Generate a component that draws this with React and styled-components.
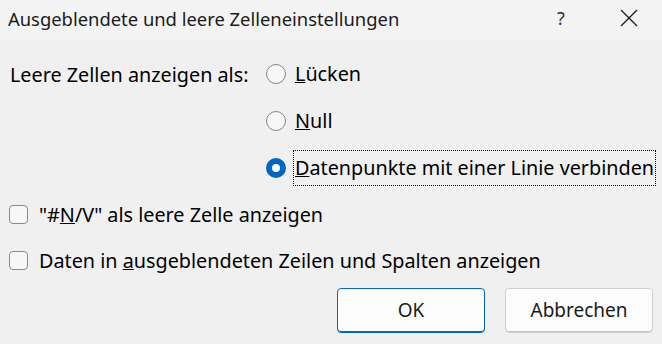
import React from 'react';
import styled, { createGlobalStyle } from 'styled-components';

const GlobalStyle = createGlobalStyle`
  html, body {
    margin: 0;
    padding: 0;
    background: #f0f0f0;
  }
  body {
    font-family: "Noto Sans", "Open Sans", sans-serif;
    color: #000;
  }
`;

const Dialog = styled.div`
  width: 662px;
  height: 344px;
  background: #f0f0f0;
  display: flex;
  flex-direction: column;
  overflow: hidden;
`;

const TitleBar = styled.div`
  height: 40px;
  background: #f3f3f3;
  display: flex;
  align-items: center;
  padding-left: 8px;
`;

const Title = styled.div`
  flex: 1;
  font-size: 18.4px;
  color: #1a1a1a;
  margin-top: -3px;
`;

const TitleButton = styled.div`
  width: 46px;
  height: 40px;
  display: flex;
  align-items: center;
  justify-content: center;
  font-size: 18px;
  color: #333;
  margin-top: -4px;
  &:last-child {
    margin-right: 10px;
    margin-left: 22px;
  }
`;

const Body = styled.div`
  padding: 10px 9px 0 9px;
  display: flex;
  flex-direction: column;
  white-space: nowrap;
`;

const EmptyGroup = styled.div`
  display: grid;
  grid-template-columns: 257px 1fr;
`;

const GroupLabel = styled.div`
  font-size: 19.8px;
  height: 47px;
  line-height: 49px;
  padding-left: 1px;
`;

const RadioList = styled.div`
  display: flex;
  flex-direction: column;
`;

const OptionRow = styled.label`
  height: 47px;
  display: flex;
  align-items: center;
  font-size: 19.8px;
  gap: 9px;
`;

const RadioCircle = styled.span`
  width: 20px;
  height: 20px;
  box-sizing: border-box;
  border-radius: 50%;
  flex: none;
  border: ${(p) => (p.checked ? '6px solid #0067c0' : '1px solid #858585')};
  background: ${(p) => (p.checked ? '#ffffff' : '#f7f7f7')};
`;

const OptionText = styled.span`
  padding: 3px 1px 3px 1px;
  border: 1px dotted ${(p) => (p.focused ? '#000' : 'transparent')};
  line-height: 28px;
  margin-left: -2px;
  white-space: nowrap;
`;

const CheckBox = styled.span`
  width: 19px;
  height: 19px;
  box-sizing: border-box;
  border: 1px solid #8a8a8a;
  border-radius: 4px;
  background: #f7f7f7;
  flex: none;
`;

const CheckRow = styled(OptionRow)`
  height: 46px;
  gap: 11px;
`;

const ButtonRow = styled.div`
  display: flex;
  justify-content: flex-end;
  gap: 20px;
  margin-top: 5px;
`;

const Button = styled.button`
  width: 148px;
  height: 45px;
  box-sizing: border-box;
  border-radius: 4px;
  font-family: inherit;
  font-size: 19px;
  color: #1a1a1a;
  background: #fdfdfd;
  border: ${(p) => (p.primary ? '1px solid #0067c0' : '1px solid #d0d0d0')};
  box-shadow: ${(p) => (p.primary ? 'inset 0 -1px 0 #0067c0' : 'inset 0 -1px 0 #c4c4c4')};
  padding: 0 0 1px 0;
`;

const CloseIcon = () => (
  <svg width="18" height="18" viewBox="0 0 18 18">
    <path d="M1 1 L17 17 M17 1 L1 17" stroke="#1a1a1a" strokeWidth="1.3" fill="none" />
  </svg>
);

export default function App() {
  return (
    <>
      <GlobalStyle />
      <Dialog>
        <TitleBar>
          <Title>Ausgeblendete und leere Zelleneinstellungen</Title>
          <TitleButton>?</TitleButton>
          <TitleButton>
            <CloseIcon />
          </TitleButton>
        </TitleBar>
        <Body>
          <EmptyGroup>
            <GroupLabel>Leere Zellen anzeigen als:</GroupLabel>
            <RadioList>
              <OptionRow>
                <RadioCircle />
                <OptionText>
                  <u>L</u>ücken
                </OptionText>
              </OptionRow>
              <OptionRow>
                <RadioCircle />
                <OptionText>
                  <u>N</u>ull
                </OptionText>
              </OptionRow>
              <OptionRow>
                <RadioCircle checked />
                <OptionText focused>
                  <u>D</u>atenpunkte mit einer Linie verbinden
                </OptionText>
              </OptionRow>
            </RadioList>
          </EmptyGroup>
          <CheckRow>
            <CheckBox />
            <span>
              &quot;#<u>N</u>/V&quot; als leere Zelle anzeigen
            </span>
          </CheckRow>
          <CheckRow>
            <CheckBox />
            <span>
              Daten in <u>a</u>usgeblendeten Zeilen und Spalten anzeigen
            </span>
          </CheckRow>
          <ButtonRow>
            <Button primary>OK</Button>
            <Button>Abbrechen</Button>
          </ButtonRow>
        </Body>
      </Dialog>
    </>
  );
}
